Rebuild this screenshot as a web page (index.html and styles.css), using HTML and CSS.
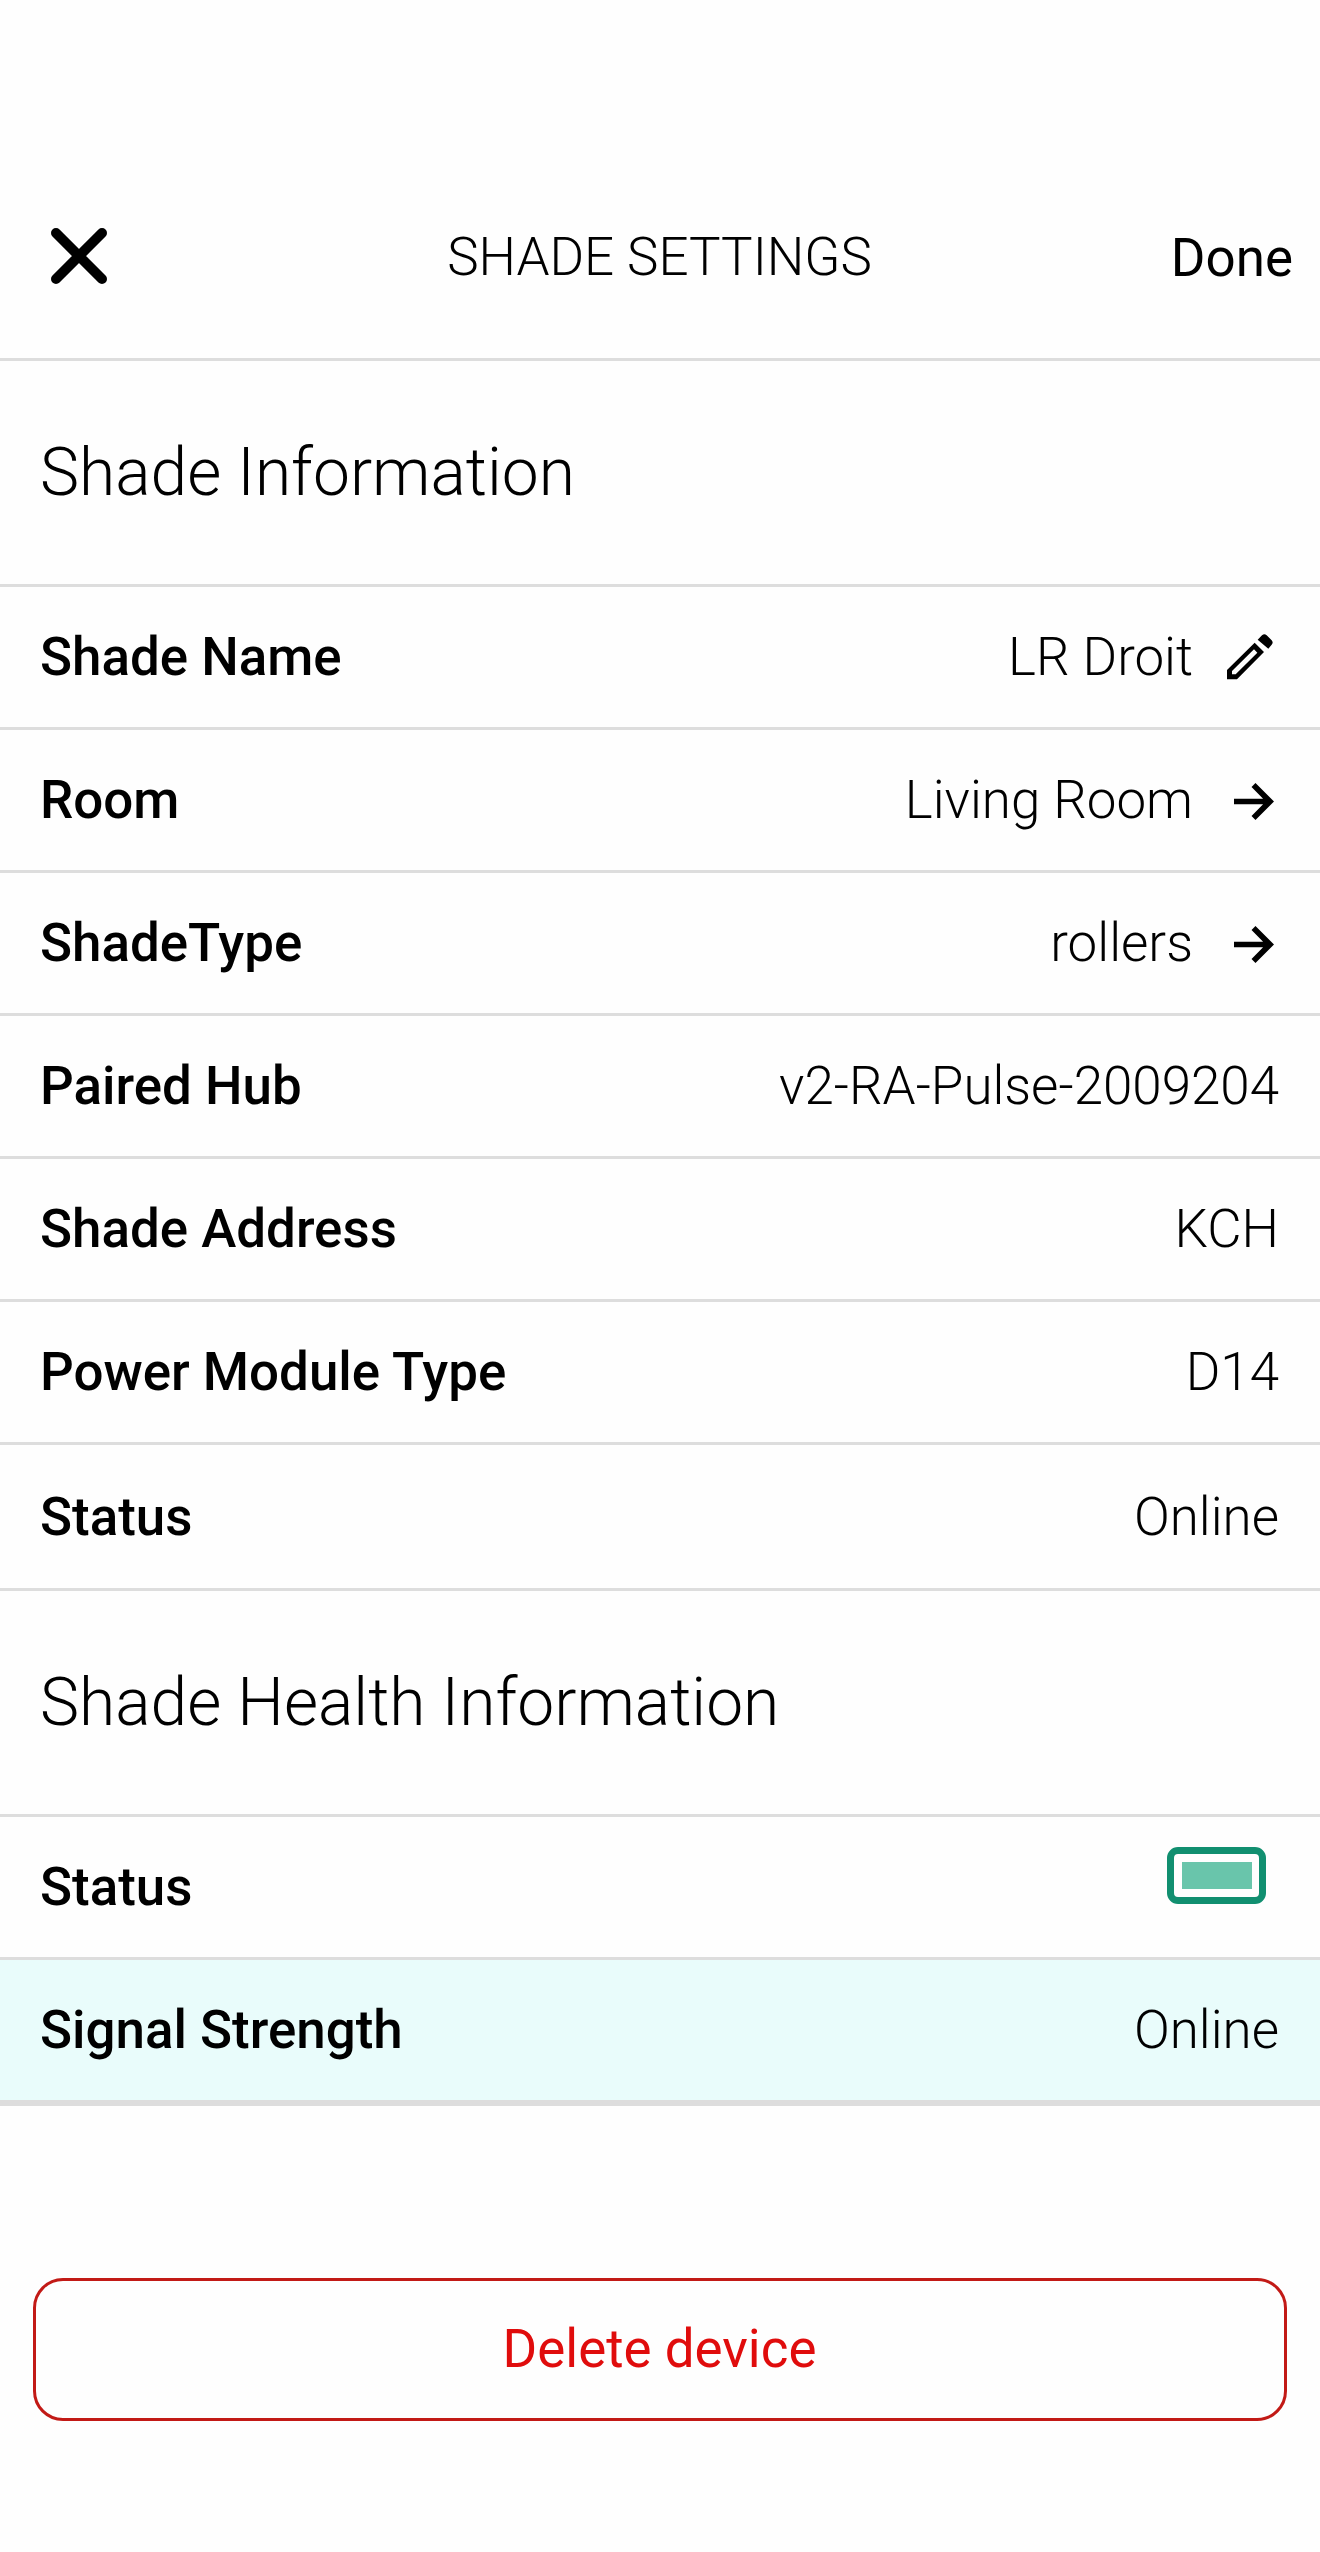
FILE: index.html
```html
<!DOCTYPE html>
<html lang="en">
<head>
    <meta charset="UTF-8">
    <meta name="viewport" content="width=device-width, initial-scale=1.0">
    <title>Shade Settings</title>
    <link rel="stylesheet" href="styles.css">
</head>
<body>
    <header class="topbar">
        <button class="close-btn" aria-label="Close">
            <svg class="close-icon" viewBox="0 0 56 56"><path d="M5 5L51 51M51 5L5 51"/></svg>
        </button>
        <h1 class="title">SHADE SETTINGS</h1>
        <button class="done-btn">Done</button>
    </header>

    <section class="group">
        <h2 class="group-title">Shade Information</h2>
        <div class="row">
            <span class="label">Shade Name</span>
            <span class="value">LR Droit</span>
            <svg class="icon-edit" viewBox="0 0 138 138"><path fill-rule="evenodd" d="M0 108L83 26L111 54L30 136H0ZM15 111V121H26L91 56L81 46ZM92 17L105 4Q112 -2 119 4L134 19Q140 26 134 32L124 44Z"/></svg>
        </div>
        <div class="row">
            <span class="label">Room</span>
            <span class="value">Living Room</span>
            <svg class="icon-arrow" viewBox="0 0 121 112"><path d="M0 47.5H88L53 12L65 0L121 56L65 112L53 100L88 64.5H0Z"/></svg>
        </div>
        <div class="row">
            <span class="label">ShadeType</span>
            <span class="value">rollers</span>
            <svg class="icon-arrow" viewBox="0 0 121 112"><path d="M0 47.5H88L53 12L65 0L121 56L65 112L53 100L88 64.5H0Z"/></svg>
        </div>
        <div class="row">
            <span class="label">Paired Hub</span>
            <span class="value">v2-RA-Pulse-2009204</span>
        </div>
        <div class="row">
            <span class="label">Shade Address</span>
            <span class="value">KCH</span>
        </div>
        <div class="row">
            <span class="label">Power Module Type</span>
            <span class="value">D14</span>
        </div>
        <div class="row row-last">
            <span class="label">Status</span>
            <span class="value">Online</span>
        </div>
    </section>

    <section class="group">
        <h2 class="group-title">Shade Health Information</h2>
        <div class="row">
            <span class="label">Status</span>
            <span class="battery"><span class="battery-level"></span></span>
        </div>
        <div class="row row-signal">
            <span class="label">Signal Strength</span>
            <span class="value">Online</span>
        </div>
    </section>

    <button class="delete-btn">Delete device</button>
</body>
</html>
```

FILE: styles.css
```css
* {
    box-sizing: border-box;
}
body {
    margin: 0;
    padding-top: 153px;
    min-height: 2552px;
    font-family: Roboto, sans-serif;
    font-size: 52.9px;
    line-height: 64px;
    color: #000;
    background-color: #fefefe;
}
button {
    padding: 0;
    border: none;
    background: none;
    font: inherit;
    color: inherit;
    cursor: pointer;
}
.topbar {
    display: grid;
    grid-template-columns: 1fr auto 1fr;
    align-items: center;
    height: 208px;
    padding: 0 27px 0 51px;
    border-bottom: 3px solid #ddd;
}
.close-btn {
    justify-self: start;
    height: 56px;
}
.close-icon {
    display: block;
    width: 56px;
    height: 56px;
    fill: none;
    stroke: #000;
    stroke-width: 10;
    stroke-linecap: round;
}
.title {
    margin: 0 25px 0 0;
    padding-top: 2px;
    font-size: 52.9px;
    font-weight: 300;
}
.done-btn {
    justify-self: end;
    padding-top: 4px;
}
.group-title {
    display: flex;
    align-items: center;
    height: 226px;
    margin: 0;
    padding: 0 40px;
    border-bottom: 3px solid #ddd;
    font-size: 65.9px;
    font-weight: 300;
}
.row {
    display: flex;
    align-items: center;
    height: 143px;
    padding: 0 41px 0 40px;
    border-bottom: 3px solid #ddd;
}
.row-last {
    height: 146px;
}
.row-signal {
    height: 146px;
    border-bottom-width: 6px;
    background-color: #e9fcfb;
}
.label {
    flex: 1;
    font-weight: 500;
}
.value {
    font-weight: 300;
}
.icon-edit {
    width: 46px;
    height: 46px;
    margin: 0 6px 0 34px;
}
.icon-arrow {
    width: 40px;
    height: 37px;
    margin: 3px 5px 0 41px;
}
.battery {
    width: 99px;
    height: 57px;
    margin: 0 13px 24px 0;
    padding: 8px 7px 7px 8px;
    border: 7px solid #118f70;
    border-radius: 11px;
}
.battery-level {
    display: block;
    height: 27px;
    background-color: #69c5ab;
}
.delete-btn {
    display: block;
    width: 1254px;
    height: 143px;
    margin: 172px auto 0;
    padding: 0 1px 1px 0;
    border: 3px solid #c21a16;
    border-radius: 30px;
    color: #e00c0c;
}
```
